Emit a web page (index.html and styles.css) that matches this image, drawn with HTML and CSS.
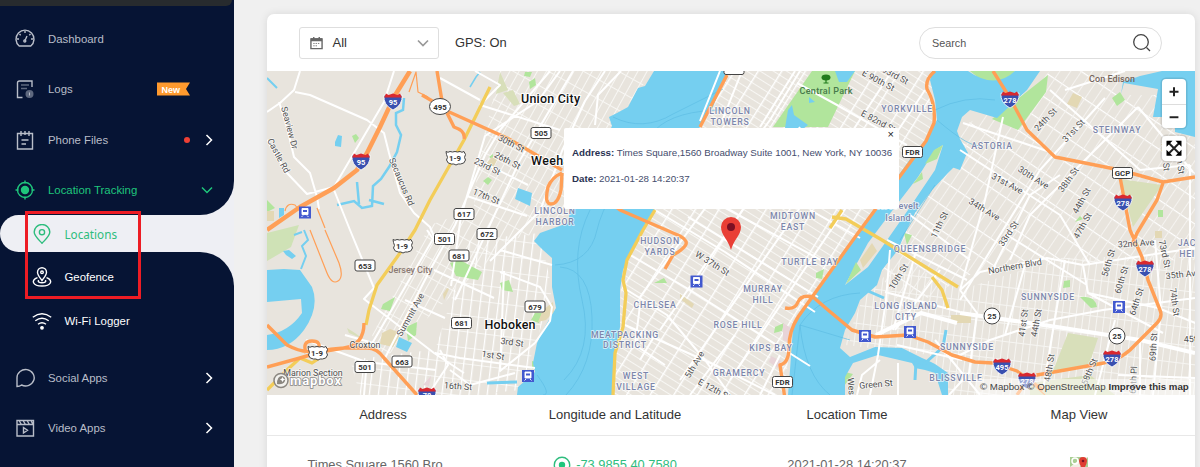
FILE: index.html
```html
<!DOCTYPE html>
<html lang="en">
<head>
<meta charset="utf-8">
<title>Locations</title>
<link rel="stylesheet" href="styles.css">
</head>
<body>
<div class="app">
<aside class="sidebar">
  <div class="block block-top">
    <div class="profile"></div>
    <nav class="nav">
      <a class="item"><svg class="ico" viewBox="0 0 20 20"><path d="M4.2 17h11.6a9 9 0 1 0-11.6 0z"/><path d="M10 11.5l2-4.5M10 2v2M2 10h2M16 10h2M4.5 5l1.2 1.2M15.5 5l-1.2 1.2"/><circle cx="9.8" cy="12" r="1"/></svg><span>Dashboard</span></a>
      <a class="item"><svg class="ico" viewBox="0 0 20 20"><path d="M17 8V2H4.500Q2.500 2 2.500 4v14.500h5"/><path class="dim" d="M6 6h8M6 9.500h6"/><circle class="dimfill" cx="14.500" cy="15" r="4"/><path d="M14.500 13.500v3" stroke-width="1"/></svg><span>Logs</span><svg class="ribbon" viewBox="0 0 33 14"><path d="M0 .5h33l-4 6.500 4 6.500H0z" fill="#ff9a2e"/><text x="4.500" y="10.500">New</text></svg></a>
      <a class="item"><svg class="ico" viewBox="0 0 20 20"><path d="M2.500 3.500h15v15.500h-15zM6 1v5M14 1v5M10 1v4M6.500 10h7M6.500 14h4.500"/></svg><span>Phone Files</span><i class="dot"></i><svg class="arrow" viewBox="0 0 8 12"><path d="M1.500 1l5 5-5 5"/></svg></a>
      <a class="item green"><svg class="ico" viewBox="0 0 20 20"><circle cx="10" cy="10" r="7.500"/><circle cx="10" cy="10" r="3.500" fill="#1fc67c"/><path d="M10 .5v3M10 16.500v3M.5 10h3M16.500 10h3"/></svg><span>Location Tracking</span><svg class="arrow down" viewBox="0 0 12 8"><path d="M1 1.500l5 5 5-5"/></svg></a>
    </nav>
  </div>
  <div class="active-row"><a class="active"><svg class="ico" viewBox="0 0 20 20"><path d="M10 19.300C6 15 2.200 11.700 2.200 8a7.800 7.500 0 0 1 15.600 0c0 3.700-3.800 7-7.800 11.300z"/><circle cx="10" cy="8.200" r="2.600"/></svg><span>Locations</span></a></div>
  <div class="block block-bottom">
    <a class="sub"><svg class="ico" viewBox="0 0 20 20"><path d="M10 13.500C7.500 10 5.500 8 5.500 5.200a4.500 4.500 0 0 1 9 0C14.500 8 12.500 10 10 13.500z"/><circle cx="10" cy="5.300" r="1.300"/><path d="M5.500 10.700C-1.500 13 .5 19 10 19s11.500-6 4.500-8.300"/><path d="M6.500 13c-1 2 1 2.800 3.500 2.800s4.500-.8 3.500-2.800"/></svg><span>Geofence</span></a>
    <a class="sub"><svg class="ico" viewBox="0 0 20 20"><path d="M.8 6.300q9.200-7 18.400 0M3.300 9.700q6.700-5 13.400 0M6 13.200q4-3 8 0"/><circle cx="10" cy="16.800" r="1.200" fill="#fff"/></svg><span>Wi-Fi Logger</span></a>
    <a class="item social"><svg class="ico" viewBox="0 0 20 20"><path d="M2 18.500V9.700a8.600 8.200 0 1 1 4.600 7.300q-2 1.500-4.600 1.500z"/></svg><span>Social Apps</span><svg class="arrow" viewBox="0 0 8 12"><path d="M1.500 1l5 5-5 5"/></svg></a>
    <a class="item"><svg class="ico" viewBox="0 0 20 20"><path d="M2 2.500h16.500V18H2zM2 6.500h16.500M4 2.500l2.500 4M8 2.500l2.500 4M12 2.500l2.500 4M16 2.500l2 4M8.500 9.500v5.500l4-2.700z"/></svg><span>Video Apps</span><svg class="arrow" viewBox="0 0 8 12"><path d="M1.500 1l5 5-5 5"/></svg></a>
  </div>
  <div class="highlight"></div>
</aside>

<main class="card">
  <header class="toolbar">
    <div class="select"><svg class="cal" viewBox="0 0 14 14"><path d="M1 2.500h12v10.500H1z" fill="none" stroke="#666" stroke-width="1.500"/><path d="M1 2h12v3H1zM3.300.5h1.500v3H3.300zM9.200.5h1.500v3H9.200z" fill="#666"/><path d="M3.500 7.500h7M3.500 10h5" stroke="#777" stroke-dasharray="1.500 1"/></svg><span>All</span><svg class="chev" viewBox="0 0 12 8"><path d="M1 1.500l5 5 5-5"/></svg></div>
    <span class="gps">GPS: On</span>
    <div class="search"><span>Search</span><svg viewBox="0 0 20 20"><circle cx="9" cy="9" r="7.300"/><path d="M14.500 14.500l3.500 3.500"/></svg></div>
  </header>

  <section class="map">
  <svg class="canvas" viewBox="267 71 928 324">
    <defs>
      <pattern id="gm" width="20" height="7" patternUnits="userSpaceOnUse" patternTransform="rotate(32)"><path d="M0 .5h20" stroke="#f8f7f4"/><path d="M.5 0v7" stroke="#fff" stroke-width="1.800"/></pattern>
      <pattern id="gu" width="8" height="17" patternUnits="userSpaceOnUse" patternTransform="rotate(29)"><path d="M0 .5h8M.5 0v17" stroke="#f8f7f4"/></pattern>
      <pattern id="gh" width="9" height="16" patternUnits="userSpaceOnUse" patternTransform="rotate(7)"><path d="M0 .5h9" stroke="#f7f6f3"/><path d="M.5 0v16" stroke="#fff" stroke-width="1.500"/></pattern>
      <pattern id="gq" width="9" height="21" patternUnits="userSpaceOnUse" patternTransform="rotate(34)"><path d="M0 .5h9" stroke="#fff" stroke-width="1.300"/><path d="M.5 0v21" stroke="#f5f3f0"/></pattern>
      <pattern id="gs" width="7" height="18" patternUnits="userSpaceOnUse" patternTransform="rotate(7)"><path d="M0 .5h7M.5 0v18" stroke="#f6f5f2"/></pattern>
      <g id="ishield"><path d="M-9-6Q-10 4 0 9 10 4 9-6 0-3-9-6z" fill="#3a50b0" stroke="#fff" stroke-width=".8"/><path d="M-7-7.500L-4.500-6 0-7.500 4.500-6 7-7.500 9-3.500H-9z" fill="#d8282f"/></g>
      <g id="us"><path d="M-9-6.500q2 1.500 4 0 2.500 1 5 0 2.500 1 5 0 2 1.500 4 0l1.500 3q-2 3 0 5.500-1 4-5 4-2.500-.5-4.500 1-2-1.500-4.500-1-4 0-5-4 2-2.500 0-5.500z" fill="#fff" stroke="#444" stroke-width="1"/><text class="num" y="2.800">1-9</text></g>
      <g id="rt"><rect x="-10" y="-5.500" width="20" height="11" rx="2" fill="#fff" stroke="#444"/></g>
      <g id="tr"><rect x="-6" y="-6" width="12" height="12" fill="#4259cf"/><path d="M-3-4h6v6h-6zM-2 3l-1.500 1.500M2 3l1.500 1.500" fill="#fff" stroke="#fff" stroke-width=".9"/><path d="M-2-2.500h4v2h-4z" fill="#4259cf"/></g>
    </defs>
    <rect x="267" y="71" width="928" height="324" fill="#e8e4dd"/>

    <!-- street grids -->
    <path fill="url(#gu)" d="M500 71H654L612 125 565 215 530 235 470 250 478 160zM430 225L500 200 500 250 385 358 372 335z"/>
    <path fill="url(#gh)" d="M470 240L540 233 552 290 540 330 520 390 470 395 435 350zM350 360L430 350 500 395 360 395z"/>
    <path fill="url(#gm)" d="M727 71H932V130L858 235 812 297 790 335 785 395H612L623 270 655 208z"/>
    <path fill="url(#gq)" d="M965 125L1030 90 1050 71H1120V95H1160L1195 140 1195 260 1080 262 975 272 905 310 880 275 910 215z"/>
    <path fill="url(#gs)" d="M862 300L900 260 960 290 1060 258 1195 255V395H950L930 355 845 345z"/>

    <!-- parks -->
    <g fill="#b1e59c">
      <path d="M812 71H855L828 127H773z"/><path d="M992 119L1048 75 1046 92 1018 130z"/><path d="M970 71h45l-7 11q-18 6-28-3z"/>
      <path d="M267 200l8 8-8 4zM383 304l12-7-5 14-9-2zM406 327l11-5-1 13-8 6zM450 263l10-3 22 12-4 8-22-4zM609 289h11v24h-8zM845 372l8 2-12 16zM855 265l10-4-12 24-6 0zM904 233l8 2-5 10zM903 190l42-45-4 12-26 30z"/>
      <path d="M525 72h7l-2 5-6-1zM529 82l6-4 1 7-6 4zM500 283l9-3 4 12-11-2zM535 313h7l-3 10-8-3zM352 136l4-2 3 4-4 5zM489 157l4-3v6zM483 181l5-4 4 3-4 5zM1112 98l8-6 5 8-8 6zM1064 281l6-1v7l-7 1zM1080 297q15-2 17 10l-6 1zM1158 210h5v7h-5zM1183 103l10-3-8 32zM654 283l10-5 3 5zM775 327l9-4-2 8-8 2zM1075 222l5-6 3 3zM816 273l8-4-2 10-6-1zM532 361l12 3v5h-12z"/>
    </g>
    <path fill="#cfe2b6" d="M267 233l32-8-8 22-24 14z"/>
    <g fill="#d8dfba"><path d="M1120 179l42 6-29 42zM1068 333l30 5-9 27-36 6zM503 93l10-3 7 14-6 2zM347 328l8 5 8 6-14-6zM1030 383l60-8 25 20h-85zM500 72l8 18-12 4z"/></g>
    <g fill="#e3d8b4"><path d="M382 333l8-4 11 4-8 14-13-3zM543 310l10-8 1 10-8 8-8 2zM1067 104l6-11 9 4-5 11zM1155 231h7v7h-7zM680 294l14 10-2 4-12-9zM860 262l10-12 8 2-14 22zM951 315h20v8h-20zM487 163l5-6 5 3-4 8zM443 294l4-6 2 1-5 11zM267 211h7v10h-7z"/></g>
    <path fill="#e8d4d8" d="M783 323l8 5-1 15-7-3zM771 356l10 5-3 7-9-6zM423 385l8-9-2 10z"/>

    <!-- water -->
    <g class="water">
      <path d="M654 71L645 86 638 88 628 107 617 113 609 117 612 126 570 210 568 223 540 233 534 241 543 250 552 258 552 287 556 308 543 330 537 343 533 363 535 372 518 387 517 395H612L615 357 620 327 620 290 623 270 633 250 643 230 655 208 700 127 713 107 727 71z"/>
      <path d="M932 71L930 80 935 100 937 120 925 140 878 208 855 237 812 297 793 327 790 370 788 395H845L845 377 853 363 878 355 912 363 915 368 925 370 935 373 942 395H948V373L935 364 929 361 922 358 902 348 875 347 850 357 840 348 845 330 855 313 860 300 877 285 882 270 898 250 905 233 915 213 932 190 948 173 968 153 960 139 957 131 962 117 970 110 997 118 1027 90 1040 71H1015Q995 90 968 71z"/>
      <path d="M946 165L967 153 960 170zM1121 94l2-12 17-6 22-5h33v66l-20-5v-15h-22l5-28-34-6zM267 270l17-1 16 1 12 17q8 20-8 43-15 20-37 20V335q22-3 35-22l-1-14-34 3z"/>
      <path d="M286 255l-3-4 6-1 7 6-4 3zM335 142l3-7 4 1-1 11-6-1zM279 208l5 0 0 7-5 3zM399 337l13 6-5 9-11-5zM518 188l14 5-2 13-15-7zM788 110l4-5 2 10 14 10-5 4-18-1zM835 71h20l-8 11h-8zM809 97l6 5-6 1z"/>
      <path d="M404 98l-1 12-7 3v12l5 10-4 17-8 15-8 12-8 7-1 20-10 2-8-7-17 4M359 204l-2-22M369 200l15 4" fill="none" stroke="#75cff0" stroke-width="2.500"/>
      <path d="M304 230l4 10-6 6 4 10-5 13M267 78l10 10M294 235l8-3" fill="none" stroke="#75cff0" stroke-width="2"/>
      <path d="M470 87l6-10 4-5" fill="none" stroke="#75cff0" stroke-width="1.500"/>
      <path d="M487 383l30-1M868 291l16 7M946 330l-3 17-19 17-12-5M915 380l1-18" fill="none" stroke="#75cff0" stroke-width="3"/>
    </g>
    <path fill="#e8e4dd" d="M943 145L935 150 918 177 898 203 868 243 845 285 868 267 885 243 908 210 935 170z"/>
    <path fill="#b1e59c" d="M943 145l-9 5-9 14 12-5zM922 172l-9 12 10-5zM856 262l-10 22 15-14z"/>
    <path fill="#e3d8b4" d="M872 243l-12 17 3 8 14-17z"/>
    <path class="ferry" d="M555 265q35-2 42-35T655 130q20-20 70-20M613 117q30 15 60-3l50-25M560 267q30 2 32 50t-26 78M590 210q-20 40-8 90t-18 80M537 375q15 20 6 20M800 325q20-30 60-32M800 325l50 15M800 325q5 50 30 70M800 325l-8 70M935 110q30-15 60-10M937 120q35 30 45 25M867 220l50-70M900 240l35-55"/>

    <!-- local roads -->
    <g class="road">
      <path d="M300 71l-6 19-14 13-13 9M295 92l15 3 57 25 17 13 5 20 11 40 14 20 16 14 5 12M394 71l-10 31-50 85M279 102l8 25 7 30 16 16 7 24 2 12M267 140l20 33 20 21 27-7M334 190l16 40 24 58-10 11 70 54 30 20M427 230l6 9-63 108M550 71L500 130 485 155 455 225 430 270 385 358M475 71L500 85 480 105 560 130M440 78l40 22M560 71l-22 30-53 35-24 80-10 70M573 71L520 160 455 300M605 71l-20 30-23 50-22 60-50 50M621 71L598 95 595 125M434 270l60 28M478 160l50 25M467 196l60 20M500 250l52 15M500 272l40 15 12 20-2 14-15 22M535 343l-35 28 4-100M440 350l8 15-20 30M306 340l60 22 70 8M435 353l25 5 75 10M367 360l-3 35M450 370l20 15 45-12M405 300l40 18M345 335l35 10"/>
      <path d="M630 255l60 35 120 76M640 297L770 120 800 71M660 330L800 127M680 380L840 150 892 71M730 380L905 120 925 90M720 71l-20 50M742 71l-20 50M795 71L760 127M797 83l40 22 70 40M627 290l40 25 38 45 25 35M625 325l90 40 60 30M640 305l-5 40 30 20M688 217l130 80M655 210l70 42 90 60M720 205l110 60M810 210l50 28M640 360l15-25M760 395l20-40M690 395l45-60"/>
      <path d="M963 123l90 30M1003 117L985 200 960 290M1050 90L1140 170 1190 165M1105 98L1040 170 960 300M1138 107L1030 215 1010 260M1138 107l55 65M960 150L1060 215 1090 265M910 215l60 45M1065 90l60-19M960 290l20-18 67-14 36 7 112-17M1065 260l-12 70-10 60M890 250l-4 50-8 55M918 245l-25 85M940 270l-45 60M887 240l80 40M885 292l75 20M897 345l65 15M1083 265l5 28 70 15 40 16M950 360l40-20 60-20 53-10 92-12M960 290l17 23-8 60-20 22M878 355l-8 40M898 363v32M880 360l-18 15-5 20M1088 293l75 40M1115 320l-20 75M1155 240l6 70-8 85M1190 165v230M1025 265l-20 70M1060 175l-30 20-40 80M1007 235l80 50M935 340l45 55M1118 375l77 3M1140 340v55"/>
      <path class="wide" d="M960 313l97 14 83 13 55 13M876 335l45-22 36 10"/>
    </g>

    <!-- arterials and motorways -->
    <g class="yellow"><path d="M490 87l-26 53-34 60-15 30-15 23-23 32-8 25-3 15M655 210l-12 20-16 30-4 20 3 13-3 34-8 26-2 42M832 217l14 2 36 21 76 47M842 210l-12 18M932 277l10 13 6 18M267 390l20-20 13-12 12 5 6-4"/></g>
    <g class="orange">
      <path class="thick" d="M410 71L394 97 380 127 367 153 357 170 334 188 300 207 267 230"/>
      <path d="M437 71l5 30 5 10 60 27 26 15 29 17M447 113l7 14q12 4 10 12M434 102l-12-7M562 173l-1 17q-3 14-10 14t-3-17q4-10 14-14M600 195l20 15 60 26q9 5 5 10t-12 9l-8 14M727 75l-27 52M267 325l20 20q15 8 25 6l32-3h23q10 0 17 10l33 37M267 367l33-9 20-6 24-4q20-3 20-25M306 353q-4-12 6-12t6 10"/>
      <path d="M935 71q-10 8-8 18 9 15 7 34l-8 18-68 92-43 60-17 24q-9 14-9 30t-9 18l5 34M785 308q10 2 13-6t15-5l15 13 24 20 23 7 33-2 20 7 24 13 23 7 18 1 24 8 26 19M1017 395l10-15 10-5 56-10q24-3 37-15l27-27q6-6 3-13l-12-30-6-23-12-27-10-53M993 71l17 27 17 32 28 27 65 13 43 12 32-5M1163 183l-6 17-20 33-5 12"/>
      <path class="thin" d="M310 230l17 43q5 12 11 8t1-18l-14-33M409 92l7-20 2 20 10 5M317 208l8 20M285 211q2-9 10-6l8 10M1045 395l-17-15"/>
    </g>

    <!-- street names -->
    <g class="street">
      <text transform="translate(289 128) rotate(75)">Seaview Dr</text><text transform="translate(278 156) rotate(62)">Castle Rd</text><text transform="translate(401 182) rotate(67)">Secaucus Rd</text><text transform="translate(487 167) rotate(26)">23rd St</text><text transform="translate(486 197) rotate(22)">17th St</text><text transform="translate(511 144) rotate(27)">30th St</text><text transform="translate(507 161) rotate(27)">26th St</text><text transform="translate(411 315) rotate(-61)">Summit Ave</text><text transform="translate(512 343) rotate(8)">3rd St</text><text transform="translate(493 356) rotate(9)">1st St</text><text transform="translate(458 387) rotate(4)">16th St</text><text transform="translate(365 346)">Croxton</text><text transform="translate(313 374)">Marion Section</text>
      <text transform="translate(712 264) rotate(32)">W 37th St</text><text transform="translate(695 365) rotate(-59)">5th Ave</text><text transform="translate(714 390) rotate(28)">E 12th St</text><text transform="translate(878 81) rotate(28)">E 90th St</text><text transform="translate(895 76) rotate(28)">93rd St</text><text transform="translate(878 122) rotate(28)">E 82nd St</text>
      <text transform="translate(1046 120) rotate(-46)">24th St</text><text transform="translate(1074 131) rotate(-46)">31st St</text><text transform="translate(1033 178) rotate(32)">30th Ave</text><text transform="translate(1007 184) rotate(28)">31st Ave</text><text transform="translate(984 210) rotate(31)">34th Ave</text><text transform="translate(1069 180) rotate(-54)">38th St</text><text transform="translate(1082 201) rotate(-61)">44th St</text><text transform="translate(1083 226) rotate(-61)">47th St</text><text transform="translate(1009 234) rotate(-56)">33rd St</text><text transform="translate(899 277) rotate(-58)">10th St</text><text transform="translate(940 225) rotate(-64)">11th St</text><text transform="translate(1015 267) rotate(-10)">Northern Blvd</text><text transform="translate(1136 244) rotate(-4)">32nd Ave</text><text transform="translate(1109 263) rotate(-74)">56th St</text><text transform="translate(1122 280) rotate(-73)">60th St</text><text transform="translate(1137 302) rotate(-72)">64th St</text><text transform="translate(1164 254) rotate(78)">73rd St</text><text transform="translate(1174 302) rotate(82)">74th St</text><text transform="translate(1183 275) rotate(-6)">35th Ave</text><text transform="translate(1024 323) rotate(-82)">41st St</text><text transform="translate(1037 323) rotate(-80)">44th St</text><text transform="translate(1154 347) rotate(-87)">69th St</text><text transform="translate(1050 368) rotate(-81)">48th St</text><text transform="translate(1090 372) rotate(-67)">58th St</text><text transform="translate(1134 380) rotate(-87)">66th Pl</text><text transform="translate(876 385) rotate(-5)">Green St</text><text transform="translate(851 393) rotate(86)">West St</text><text transform="translate(1165 157) rotate(86)">70th St</text><text transform="translate(1179 160) rotate(82)">75th St</text><text transform="translate(1201 339) rotate(-4)">45th Ave</text>
    </g>
    <g class="area">
      <text x="730" y="114">LINCOLN</text><text x="730" y="125">TOWERS</text><text x="555" y="214">LINCOLN</text><text x="555" y="225">HARBOR</text><text x="660" y="244">HUDSON</text><text x="660" y="255">YARDS</text><text x="655" y="308">CHELSEA</text><text x="625" y="338">MEATPACKING</text><text x="625" y="348">DISTRICT</text><text x="636" y="379">WEST</text><text x="636" y="390">VILLAGE</text><text x="738" y="328">ROSE HILL</text><text x="739" y="376">GRAMERCY</text><text x="763" y="292">MURRAY</text><text x="763" y="303">HILL</text><text x="771" y="351">KIPS BAY</text><text x="810" y="265">TURTLE BAY</text><text x="793" y="219">MIDTOWN</text><text x="793" y="230">EAST</text><text x="907" y="112">YORKVILLE</text><text x="992" y="149">ASTORIA</text><text x="1117" y="133">STEINWAY</text><text x="930" y="252">QUEENSBRIDGE</text><text x="906" y="309">LONG ISLAND</text><text x="906" y="320">CITY</text><text x="1048" y="300">SUNNYSIDE</text><text x="967" y="350">SUNNYSIDE</text><text x="956" y="381">BLISSVILLE</text><text x="1200" y="246">JACKSON</text><text x="1200" y="257">HEIGHTS</text>
      <g class="plain"><text x="898" y="209">Roosevelt</text><text x="898" y="221">Island</text></g>
    </g>
    <g class="place"><text x="550.500" y="103" textLength="59">Union City</text><text x="566" y="165" textLength="70">Weehawken</text><text x="510" y="329" textLength="51">Hoboken</text></g>
    <g class="poi"><text x="410.500" y="273" fill="#8c7b74" textLength="44">Jersey City</text><text x="826" y="94" fill="#477a4b" textLength="53">Central Park</text><text x="1112" y="82" fill="#74655c" textLength="46">Con Edison</text></g>
    <path d="M826 83v-4M823.500 83h5" stroke="#207b1b" stroke-width="1.200"/><ellipse cx="826" cy="77.500" rx="4.500" ry="3" fill="#207b1b"/>

    <!-- route markers -->
    <g class="shieldnum">
      <g transform="translate(393 101)"><use href="#ishield"/><text y="4">95</text></g><g transform="translate(361 161)"><use href="#ishield"/><text y="4">95</text></g><g transform="translate(1010 99)"><use href="#ishield"/><text y="4">278</text></g><g transform="translate(1123 202)"><use href="#ishield"/><text y="4">278</text></g><g transform="translate(1145 268)"><use href="#ishield"/><text y="4">278</text></g><g transform="translate(1112 358)"><use href="#ishield"/><text y="4">278</text></g><g transform="translate(1002 366)"><use href="#ishield"/><text y="4">495</text></g><g transform="translate(1027 380)"><use href="#ishield"/><text y="4">278</text></g><g transform="translate(427 395)"><use href="#ishield"/><text y="3">78</text></g>
    </g>
    <use href="#us" x="455" y="158"/><use href="#us" x="402" y="246"/><use href="#us" x="317" y="353"/>
    <g class="num">
      <g transform="translate(541 133)"><use href="#rt"/><text y="3">505</text></g><g transform="translate(464 214)"><use href="#rt"/><text y="3">617</text></g><g transform="translate(487 234)"><use href="#rt"/><text y="3">672</text></g><g transform="translate(444.500 239)"><use href="#rt"/><text y="3">501</text></g><g transform="translate(459 255.500)"><use href="#rt"/><text y="3">681</text></g><g transform="translate(365 265.500)"><use href="#rt"/><text y="3">653</text></g><g transform="translate(461.500 323)"><use href="#rt"/><text y="3">681</text></g><g transform="translate(402 361.500)"><use href="#rt"/><text y="3">663</text></g><g transform="translate(365 367)"><use href="#rt"/><text y="3">501</text></g><g transform="translate(535 306.500)"><use href="#rt"/><text y="3">679</text></g><g transform="translate(912.500 152)"><use href="#rt"/><text y="3">FDR</text></g><g transform="translate(782.500 382)"><use href="#rt"/><text y="3">FDR</text></g><g transform="translate(1122.500 173)"><use href="#rt"/><text y="3">GCP</text></g><g transform="translate(734 69)"><use href="#rt"/></g>
      <ellipse cx="440" cy="106.500" rx="10.500" ry="8"/><text x="440" y="109.500">495</text><circle cx="992" cy="316" r="8"/><text x="992" y="319">25</text><circle cx="1117" cy="336" r="8"/><text x="1117" y="339">25</text>
    </g>
    <use href="#tr" x="305" y="212.500"/><use href="#tr" x="696.500" y="281.500"/><use href="#tr" x="865" y="336"/><use href="#tr" x="910" y="332"/><use href="#tr" x="528" y="376"/><use href="#tr" x="1119" y="307"/>

    <!-- location pin -->
    <path d="M731 250C728 239 721 235 721 227a10 10 0 0 1 20 0c0 8-7 12-10 23z" fill="#e93f35"/><circle cx="731" cy="227" r="4" fill="#7b1023"/>
    <g><circle cx="281" cy="380.500" r="7" fill="#f3f2ee" stroke="#8b8780" stroke-width="1.500"/><path d="M277 384q0-8 5-8 4 1 3 5-2 4-8 3z" fill="#8b8780"/><path d="M282.500 377l1 1.700 1.700.8-1.700.8-1 1.700-1-1.700-1.700-.8 1.700-.8z" fill="#fff"/><text class="mapbox" x="290" y="385" textLength="51">mapbox</text></g>
  </svg>
  <div class="popup"><span class="close">×</span><p><b>Address:</b> Times Square,1560 Broadway Suite 1001, New York, NY 10036</p><p><b>Date:</b> 2021-01-28 14:20:37</p></div>
  <div class="controls">
    <div class="group"><svg viewBox="0 0 24 24"><path d="M12 8v9M7.500 12.500h9"/></svg><svg viewBox="0 0 24 24"><path d="M7.500 12.500h9"/></svg></div>
    <div class="group"><svg viewBox="0 0 24 24"><path d="M6 6l12 12M18 6L6 18" stroke-width="2"/><path d="M4.500 4.500h6l-6 6zM19.500 4.500v6l-6-6zM4.500 19.500v-6l6 6zM19.500 19.500h-6l6-6z" fill="#000" stroke="none"/></svg></div>
  </div>
  <div class="attrib"><span>© Mapbox</span> <span>© OpenStreetMap</span> <b>Improve this map</b></div>
  </section>

  <section class="table">
    <div class="row head"><span>Address</span><span>Longitude and Latitude</span><span>Location Time</span><span>Map View</span></div>
    <div class="row body"><span class="addr">Times Square 1560 Bro</span><span class="coord"><svg viewBox="0 0 18 18"><circle cx="9" cy="9" r="7.700" fill="none" stroke="#2fbd7e" stroke-width="1.400"/><circle cx="9" cy="9" r="3.200" fill="#1fc67c"/></svg>-73.9855 40.7580</span><span>2021-01-28 14:20:37</span><span><svg class="thumb" viewBox="0 0 20 18"><path d="M1 1h18v17H1z" fill="#a9cf94"/><path d="M1 11L14 1h5L5 18H1z" fill="#f2efe5"/><circle cx="6" cy="5" r="3" fill="none" stroke="#fff" stroke-width="1.500"/><path d="M14 14q-4-6-4-9a4 4 0 0 1 8 0q0 3-4 9z" fill="#df3c32"/><circle cx="14" cy="5" r="1.300" fill="#7b1023"/></svg></span></div>
  </section>
</main>
</div>
</body>
</html>
```

FILE: styles.css
```css
* { box-sizing: border-box; }
html, body { margin: 0; height: 100%; overflow: hidden; }
body { background: #f0f0f0; font-family: "Liberation Sans", Arial, sans-serif; }
.app { display: flex; height: 467px; overflow: hidden; }

/* sidebar */
.sidebar { position: relative; flex: none; width: 234px; height: 467px; background: #eeeff4; font-size: 11.400px; color: #b9bec9; }
.block { background: #061434; }
.block-top { height: 215px; border-radius: 0 0 34px 0; overflow: hidden; }
.profile { width: 232px; height: 6px; background: #272b2e; border-radius: 0 0 22px 0; }
.nav { padding-top: 7.800px; }
.item { display: flex; align-items: center; height: 50.300px; padding: 0 21px 0 15px; }
.ico { width: 20px; height: 20px; margin-right: 13px; flex: none; fill: none; stroke: currentColor; stroke-width: 1.400; }
.item span { flex: 1; }
.dim { stroke: #5e687e; }
.dimfill { fill: #5e687e; stroke: none; }
.green { color: #1fc67c; }
.arrow { width: 8px; height: 12px; fill: none; stroke: #fff; stroke-width: 1.500; }
.arrow.down { width: 12px; height: 8px; stroke: #1fc67c; }
.dot { width: 6px; height: 6px; border-radius: 50%; background: #ee4035; margin-right: 15px; }
.ribbon { width: 33px; height: 14px; margin-right: 23px; }
.ribbon text { font: bold 9px "Liberation Sans", sans-serif; fill: #fff; }
.active-row { height: 37px; background: linear-gradient(90deg, #061434 30px, #eeeff4 30px); }
.active { display: flex; align-items: center; height: 37px; padding-left: 32px; background: #eeeff4; border-radius: 19px 0 0 19px; color: #2dbd7d; font: 11.700px "Noto Sans", sans-serif; }
.active .ico, .sub .ico { margin-right: 12.500px; }
.block-bottom { height: 215px; border-radius: 0 34px 0 0; padding-top: 3.500px; }
.sub { display: flex; align-items: center; height: 43.500px; padding-left: 32px; color: #fff; }
.social { margin-top: 10.500px; }
.highlight { position: absolute; left: 25px; top: 211px; width: 116px; height: 88px; border: 3px solid #ed1c24; }

/* card */
.card { flex: none; width: 928px; height: 470px; margin: 14px 0 0 33px; background: #fff; border-radius: 7px 7px 0 0; box-shadow: 0 0 8px rgba(0, 0, 0, .1); }
.toolbar { display: flex; align-items: center; height: 57px; padding: 0 33px 0 32px; font-size: 12.900px; color: #333; }
.select { display: flex; align-items: center; width: 140px; height: 32px; border: 1px solid #dedede; border-radius: 3px; padding: 0 9px 0 10px; }
.select span { flex: 1; font-size: 13px; }
.cal { width: 13px; height: 14px; margin-right: 9.500px; }
.chev { width: 12px; height: 8px; fill: none; stroke: #999; stroke-width: 1.700; }
.gps { flex: 1; margin-left: 16px; }
.search { display: flex; align-items: center; justify-content: space-between; width: 243px; height: 32px; border: 1px solid #dedede; border-radius: 16px; padding: 0 9px 0 12px; font-size: 10.800px; color: #555; }
.search svg { width: 20px; height: 20px; fill: none; stroke: #444; stroke-width: 1.300; }

/* map */
.map { position: relative; height: 324px; overflow: hidden; }
.canvas { display: block; width: 928px; height: 324px; }
.canvas text { font-family: Roboto, sans-serif; }
.water { fill: #75cff0; }
.ferry { fill: none; stroke: #5bbbe2; stroke-width: .8; opacity: .8; }
.road { fill: none; stroke: #fff; stroke-width: 2; stroke-linejoin: round; }
.road .wide { stroke-width: 4; }
.yellow { fill: none; stroke: #f3cd59; stroke-width: 3.300; stroke-linejoin: round; }
.orange { fill: none; stroke: #ff9f56; stroke-width: 3.400; stroke-linejoin: round; }
.orange .thick { stroke-width: 4.500; }
.orange .thin { stroke-width: 1.200; }
.street text { font-size: 8.900px; fill: #505050; text-anchor: middle; dominant-baseline: middle; paint-order: stroke; stroke: rgba(255, 255, 255, .7); stroke-width: 1.500px; }
.area text { font-size: 8.700px; letter-spacing: .8px; fill: #7c86ab; font-weight: 500; text-anchor: middle; paint-order: stroke; stroke: rgba(255, 255, 255, .75); stroke-width: 1.500px; }
.area .plain text { font-size: 9px; letter-spacing: .2px; }
.place text { font-size: 12.500px; font-weight: 500; fill: #111; text-anchor: middle; paint-order: stroke; stroke: #fff; stroke-width: 2px; }
.poi text { font-size: 9px; font-weight: 500; text-anchor: middle; }
.num text, text.num { font-size: 7.800px; font-weight: bold; fill: #333; text-anchor: middle; }
.num ellipse, .num circle { fill: #fff; stroke: #444; }
.shieldnum text { font-size: 7.500px; font-weight: bold; fill: #fff; text-anchor: middle; }
.canvas .mapbox { font: bold 13px Roboto, sans-serif; fill: #fff; stroke: #888; stroke-width: 1.500px; paint-order: stroke; }
.popup { position: absolute; left: 297px; top: 57px; width: 335px; height: 81px; background: #fff; border-radius: 2px; padding: 19px 0 0 8px; font-size: 9.750px; color: #454d6d; white-space: nowrap; }
.popup p { margin: 0 0 14px; line-height: 12px; }
.popup b { color: #293252; }
.close { position: absolute; right: 5px; top: 0; font-size: 11px; line-height: 13px; color: #222; }
.controls { position: absolute; left: 895px; top: 8px; width: 24px; display: flex; flex-direction: column; gap: 8px; }
.group { background: #fff; border-radius: 4px; box-shadow: 0 0 0 1.500px rgba(0, 0, 0, .1); }
.group svg { display: block; width: 24px; height: 24.500px; fill: none; stroke: #222; stroke-width: 2; }
.group svg + svg { border-top: 1px solid #ddd; }
.attrib { position: absolute; right: 0; bottom: 0; width: 219px; height: 16px; padding-left: 4px; background: rgba(255, 255, 255, .5); font: 9.700px/15px "Liberation Sans", sans-serif; color: #444; display: flex; gap: 3px; white-space: nowrap; }
.attrib b { color: #333; }

/* table */
.row { display: grid; grid-template-columns: repeat(4, 232px); align-items: center; justify-items: center; font-size: 13px; color: #333; }
.head { height: 41px; padding-bottom: 2px; border-bottom: 1px solid #e8e8e8; }
.body { height: 57px; font-size: 12.850px; color: #666; }
.addr { margin-right: 16px; }
.coord { display: flex; align-items: center; gap: 5px; color: #2fbd7e; }
.coord svg { width: 18px; height: 18px; }
.thumb { display: block; width: 20px; height: 18px; }
```
